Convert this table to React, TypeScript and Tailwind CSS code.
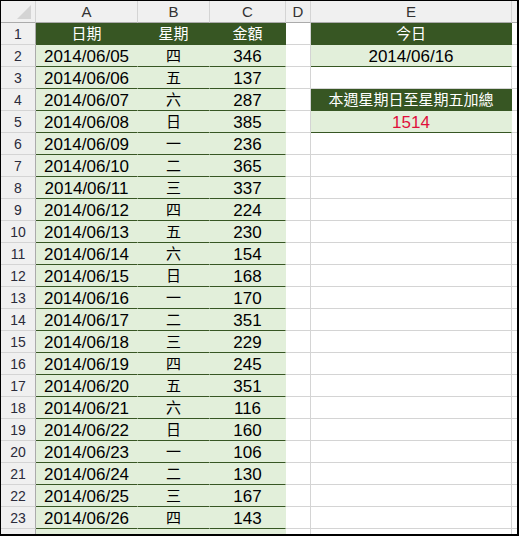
const rows: [string, string, number][] = [
  ['2014/06/05', '四', 346],
  ['2014/06/06', '五', 137],
  ['2014/06/07', '六', 287],
  ['2014/06/08', '日', 385],
  ['2014/06/09', '一', 236],
  ['2014/06/10', '二', 365],
  ['2014/06/11', '三', 337],
  ['2014/06/12', '四', 224],
  ['2014/06/13', '五', 230],
  ['2014/06/14', '六', 154],
  ['2014/06/15', '日', 168],
  ['2014/06/16', '一', 170],
  ['2014/06/17', '二', 351],
  ['2014/06/18', '三', 229],
  ['2014/06/19', '四', 245],
  ['2014/06/20', '五', 351],
  ['2014/06/21', '六', 116],
  ['2014/06/22', '日', 160],
  ['2014/06/23', '一', 106],
  ['2014/06/24', '二', 130],
  ['2014/06/25', '三', 167],
  ['2014/06/26', '四', 143],
];

type Kind = 'dark' | 'light' | 'white';

const kindClass: Record<Kind, string> = {
  dark: 'bg-[#375623] text-white border-r border-b border-[#375623]',
  light: 'bg-[#e2efda] text-black border-r border-b border-r-[#e2efda] border-b-[#375623]',
  white: 'bg-white text-black border-r border-b border-[#d4d4d4]',
};

function Cell({ w, kind, children, className = '' }: { w: string; kind: Kind; children?: React.ReactNode; className?: string }) {
  return (
    <div className={`${w} ${kindClass[kind]} h-full shrink-0 flex items-center justify-center overflow-hidden whitespace-nowrap ${className}`}>
      {children}
    </div>
  );
}

function RowHead({ n }: { n?: number }) {
  return (
    <div className="w-[35px] h-full shrink-0 bg-[#f0f0f0] border-b border-r border-b-[#d4d4d4] border-r-[#ababab] flex items-center justify-center text-[14px] text-[#2b2b3b]">
      {n}
    </div>
  );
}

function eKind(r: number): Kind {
  if (r === 1 || r === 4) return 'dark';
  if (r === 2 || r === 5) return 'light';
  return 'white';
}

export default function App() {
  const eText: Record<number, React.ReactNode> = {
    1: <span className="text-[15px]">今日</span>,
    2: '2014/06/16',
    4: <span className="text-[15px]">本週星期日至星期五加總</span>,
    5: <span className="text-[#e0103c]">1514</span>,
  };

  return (
    <div className="w-[519px] h-[536px] overflow-hidden bg-white border-t border-l border-r-2 border-b-2 border-black font-['Liberation_Sans','Noto_Sans_CJK_TC',sans-serif] text-[17px] leading-none">
      {/* column headers */}
      <div className="flex h-[22px] text-[15px] text-[#333]">
        <div className="w-[35px] h-full shrink-0 bg-[#f0f0f0] border-r border-b border-r-[#d4d4d4] border-b-[#ababab] relative">
          <svg className="absolute left-[16px] top-[4px]" width="15" height="15" viewBox="0 0 15 15">
            <polygon points="14,0 14,14 0,14" fill="#d4d4d4" />
          </svg>
        </div>
        {[
          ['A', 'w-[102px]'],
          ['B', 'w-[72px]'],
          ['C', 'w-[76px]'],
          ['D', 'w-[25px]'],
          ['E', 'w-[201px]'],
        ].map(([l, w]) => (
          <div key={l} className={`${w} h-full shrink-0 bg-[#f0f0f0] border-r border-b border-r-[#d4d4d4] border-b-[#ababab] flex items-center justify-center`}>
            {l}
          </div>
        ))}
        <div className="flex-1 h-full bg-[#f0f0f0] border-b border-b-[#ababab]" />
      </div>

      {/* row 1 */}
      <div className="flex h-[22px]">
        <RowHead n={1} />
        <Cell w="w-[102px]" kind="dark" className="text-[15px]">日期</Cell>
        <Cell w="w-[72px]" kind="dark" className="text-[15px]">星期</Cell>
        <Cell w="w-[76px]" kind="dark" className="text-[15px]">金額</Cell>
        <Cell w="w-[25px]" kind="white" />
        <Cell w="w-[201px]" kind="dark">{eText[1]}</Cell>
        <div className="flex-1 h-full border-b border-[#d4d4d4]" />
      </div>

      {rows.map(([d, wd, amt], i) => {
        const r = i + 2;
        return (
          <div key={r} className="flex h-[22px]">
            <RowHead n={r} />
            <Cell w="w-[102px]" kind="light" className="pt-px">{d}</Cell>
            <Cell w="w-[72px]" kind="light" className="text-[15px]">{wd}</Cell>
            <Cell w="w-[76px]" kind="light" className="pt-px">{amt}</Cell>
            <Cell w="w-[25px]" kind="white" />
            <Cell w="w-[201px]" kind={eKind(r)} className={r === 4 ? '' : 'pt-px'}>{eText[r]}</Cell>
            <div className="flex-1 h-full border-b border-[#d4d4d4]" />
          </div>
        );
      })}

      {/* row 24, cut off by the window edge */}
      <div className="flex h-[22px]">
        <RowHead />
        <Cell w="w-[102px]" kind="light" />
        <Cell w="w-[72px]" kind="light" />
        <Cell w="w-[76px]" kind="light" />
        <Cell w="w-[25px]" kind="white" />
        <Cell w="w-[201px]" kind="white" />
        <div className="flex-1 h-full border-b border-[#d4d4d4]" />
      </div>
    </div>
  );
}
